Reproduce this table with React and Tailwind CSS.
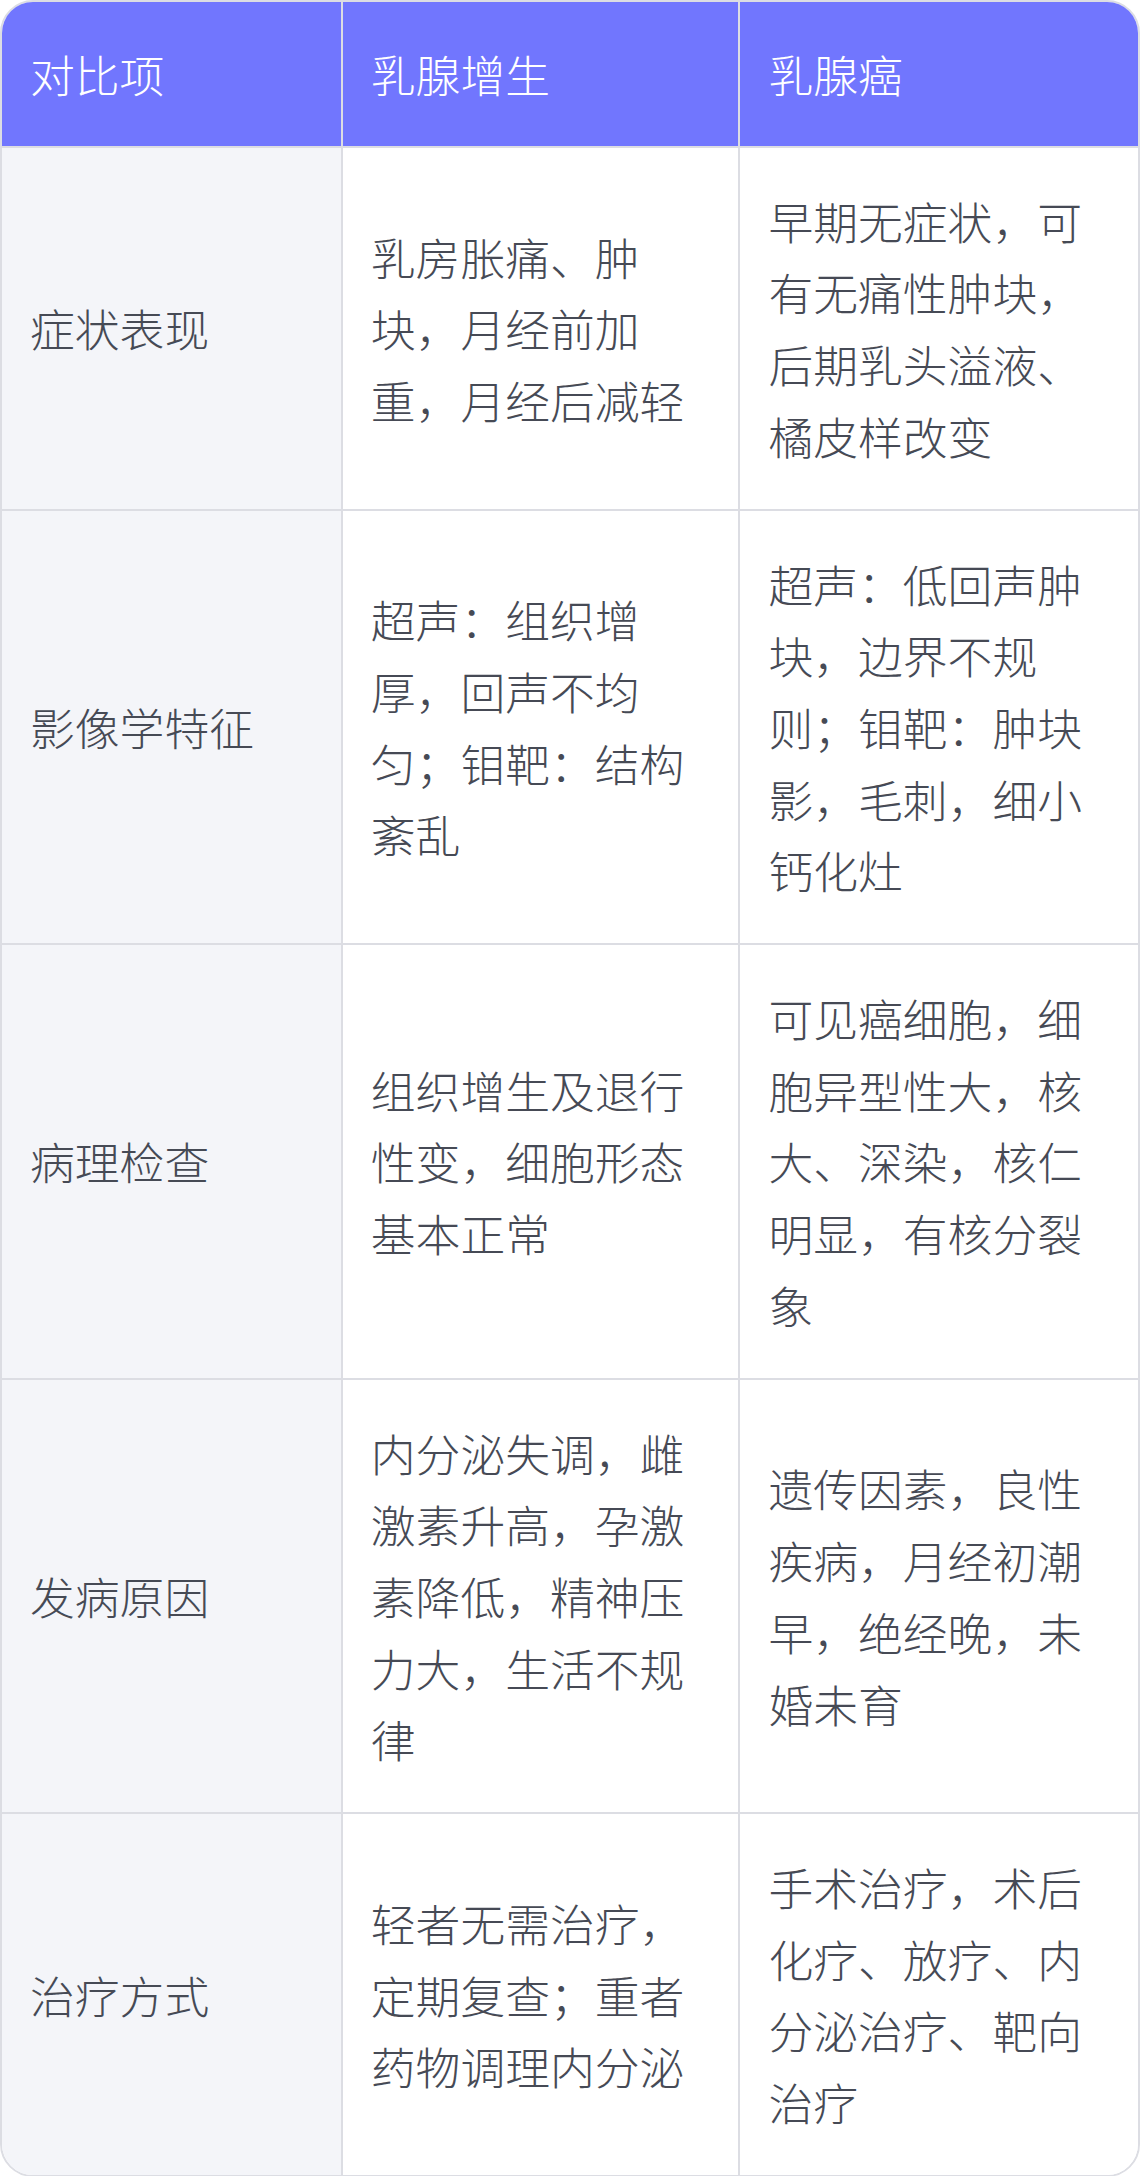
import React from "react";

const rows = [
  {
    item: "症状表现",
    a: "乳房胀痛、肿块，月经前加重，月经后减轻",
    b: "早期无症状，可有无痛性肿块，后期乳头溢液、橘皮样改变",
  },
  {
    item: "影像学特征",
    a: "超声：组织增厚，回声不均匀；钼靶：结构紊乱",
    b: "超声：低回声肿块，边界不规则；钼靶：肿块影，毛刺，细小钙化灶",
  },
  {
    item: "病理检查",
    a: "组织增生及退行性变，细胞形态基本正常",
    b: "可见癌细胞，细胞异型性大，核大、深染，核仁明显，有核分裂象",
  },
  {
    item: "发病原因",
    a: "内分泌失调，雌激素升高，孕激素降低，精神压力大，生活不规律",
    b: "遗传因素，良性疾病，月经初潮早，绝经晚，未婚未育",
  },
  {
    item: "治疗方式",
    a: "轻者无需治疗，定期复查；重者药物调理内分泌",
    b: "手术治疗，术后化疗、放疗、内分泌治疗、靶向治疗",
  },
];

export default function App() {
  return (
    <div className="w-[1140px] bg-white font-['Noto_Sans_CJK_SC','Noto_Sans',sans-serif] font-light">
      <div className="overflow-hidden rounded-[33px] border-2 border-[#dcdde3]">
        <table className="w-full table-fixed border-separate border-spacing-0 text-[44.8px] leading-[71.7px]">
          <colgroup>
            <col className="w-[30%]" />
            <col className="w-[35%]" />
            <col className="w-[35%]" />
          </colgroup>
          <thead>
            <tr className="bg-[#7176fe] text-white">
              <th className="border-r-2 border-b-2 border-[#dcdde3] px-7 py-[36px] text-left font-light">
                对比项
              </th>
              <th className="border-r-2 border-b-2 border-[#dcdde3] px-7 py-[36px] text-left font-light">
                乳腺增生
              </th>
              <th className="border-b-2 border-[#dcdde3] px-7 py-[36px] text-left font-light">
                乳腺癌
              </th>
            </tr>
          </thead>
          <tbody className="text-[#464a55]">
            {rows.map((row, i) => {
              const last = i === rows.length - 1;
              return (
                <tr key={row.item}>
                  <td
                    className={`border-r-2 border-[#dcdde3] bg-[#f4f5f9] px-7 py-[37px] align-middle ${
                      last ? "" : "border-b-2"
                    }`}
                  >
                    {row.item}
                  </td>
                  <td
                    className={`border-r-2 border-[#dcdde3] bg-white px-7 py-[37px] align-middle ${
                      last ? "" : "border-b-2"
                    }`}
                  >
                    {row.a}
                  </td>
                  <td
                    className={`border-[#dcdde3] bg-white px-7 py-[37px] align-middle ${
                      last ? "" : "border-b-2"
                    }`}
                  >
                    {row.b}
                  </td>
                </tr>
              );
            })}
          </tbody>
        </table>
      </div>
    </div>
  );
}
